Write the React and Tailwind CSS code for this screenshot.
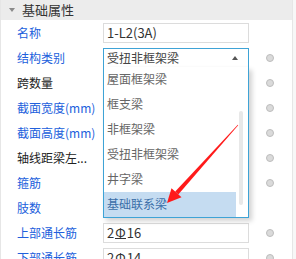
import React from 'react'

const rows = [
  { label: '名称', blue: true, value: '1-L2(3A)', radio: false },
  { label: '结构类别', blue: true, select: true, radio: true },
  { label: '跨数量', blue: false, radio: true },
  { label: '截面宽度(mm)', blue: true, radio: true },
  { label: '截面高度(mm)', blue: true, radio: true },
  { label: '轴线距梁左...', blue: false, radio: true },
  { label: '箍筋', blue: true, radio: true },
  { label: '肢数', blue: true, radio: false },
  { label: '上部通长筋', blue: true, bar: '16', radio: true },
  { label: '下部通长筋', blue: true, bar: '14', radio: true },
]

const options = ['屋面框架梁', '框支梁', '非框架梁', '受扭非框架梁', '井字梁', '基础联系梁']

function Rebar({ size }) {
  return (
    <span>
      2<span className="inline-block leading-[11px] border-b border-[#333] mx-[1px]">Φ</span>{size}
    </span>
  )
}

function Dropdown() {
  return (
    <div className="absolute left-[-1px] top-full w-[146px] h-[151px] bg-white border border-t-0 border-[#3ea3d6] shadow-[3px_3px_5px_rgba(0,0,0,0.18)] z-10">
      <div className="flex">
        <div className="w-[132px]">
          {options.map((o, i) => (
            <div key={o}
              className={'h-[25px] flex items-center pl-[3px] ' + (i === 5 ? 'bg-[#c5dcf1] text-[#3a6ea8]' : 'text-[#666]')}>
              {o}
            </div>
          ))}
        </div>
        <div className="w-[4px] ml-[3px] mt-[44px] h-[94px] rounded-full bg-[#e8e8e8]" />
      </div>
    </div>
  )
}

export default function App() {
  return (
    <div className="relative w-[296px] h-[259px] overflow-hidden bg-white text-[12px] text-[#333]"
      style={{ fontFamily: '"Noto Sans CJK SC", "Noto Sans", sans-serif' }}>
      <div className="flex h-full">
        <div className="w-[293px] border-l border-[#e6e6e6] border-r">
          <div className="h-[20px] bg-[#ececec] flex items-center">
            <svg width="6" height="4" viewBox="0 0 6 4" className="ml-[8px]">
              <path d="M0 0h6L3 4z" fill="#8a8a8a" />
            </svg>
            <span className="ml-[7px] text-[13px] text-[#333]">基础属性</span>
          </div>
          {rows.map(r => (
            <div key={r.label} className="h-[25px] flex items-center">
              <div className={'w-[102px] pl-[16px] whitespace-nowrap ' + (r.blue ? 'text-[#2160dc]' : 'text-[#222]')}>
                {r.label}
              </div>
              {r.select ? (
                <div className="relative w-[146px] h-[20px] border border-[#3ea3d6] flex items-center pl-[3px] pr-[10px] text-[#444]">
                  <span className="flex-1">受扭非框架梁</span>
                  <svg width="6" height="4" viewBox="0 0 6 4">
                    <path d="M0 4h6L3 0z" fill="#555" />
                  </svg>
                  <Dropdown />
                </div>
              ) : (
                <div className="w-[146px] h-[20px] border border-[#dcdcdc] flex items-center pl-[3px] text-[#333] text-[13px]">
                  {r.value}
                  {r.bar && <Rebar size={r.bar} />}
                </div>
              )}
              {r.radio && (
                <div className="ml-[17px] w-[8px] h-[8px] rounded-full bg-[#dadada] border border-[#bdbdbd]" />
              )}
            </div>
          ))}
        </div>
        <div className="flex-1 bg-[#f7f7f7]" />
      </div>
      <svg className="absolute left-0 top-0 pointer-events-none z-20" width="296" height="259">
        <polygon points="238.2,125.2 237.8,124.8 175.2,191.6 178.3,194.4" fill="#ff1a1a" />
        <polygon points="167,203 181.5,197.2 171.5,188.2" fill="#ff1a1a" />
      </svg>
    </div>
  )
}
